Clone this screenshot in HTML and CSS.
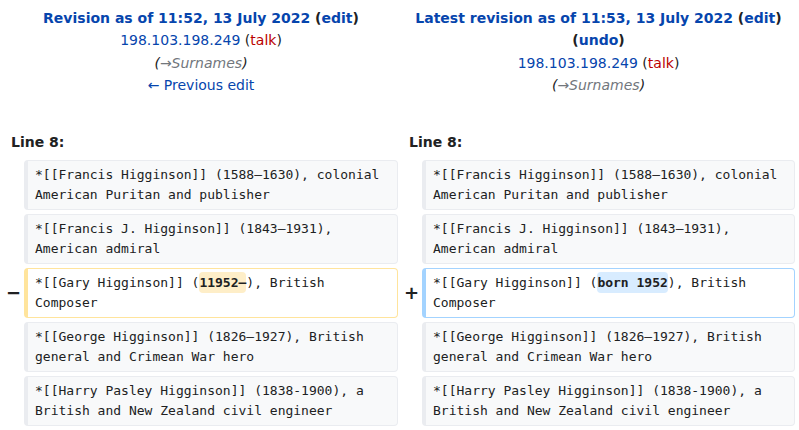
FILE: index.html
```html
<!DOCTYPE html>
<html>
<head>
<meta charset="utf-8">
<link rel="stylesheet" href="styles.css">
</head>
<body>
<div class="diff">
  <div class="title">
    <div class="t-main"><a class="lnk">Revision as of 11:52, 13 July 2022</a> <span class="paren">(<a class="lnk">edit</a>)</span></div>
    <div><a class="ip">198.103.198.249</a> <span class="paren-n">(<a class="talk">talk</a>)</span></div>
    <div class="cmt"><span class="pc">(</span>→Surnames<span class="pc">)</span></div>
    <div><a class="ip">← Previous edit</a></div>
  </div>
  <div class="title">
    <div class="t-main"><a class="lnk">Latest revision as of 11:53, 13 July 2022</a> <span class="paren">(<a class="lnk">edit</a>)</span> <span class="paren">(<a class="lnk">undo</a>)</span></div>
    <div><a class="ip">198.103.198.249</a> <span class="paren-n">(<a class="talk">talk</a>)</span></div>
    <div class="cmt"><span class="pc">(</span>→Surnames<span class="pc">)</span></div>
  </div>

  <div class="lineno">Line 8:</div>
  <div class="lineno">Line 8:</div>

  <div class="marker"></div>
  <div class="cell ctx">*[[Francis Higginson]] (1588–1630), colonial American Puritan and publisher</div>
  <div class="marker"></div>
  <div class="cell ctx">*[[Francis Higginson]] (1588–1630), colonial American Puritan and publisher</div>

  <div class="marker"></div>
  <div class="cell ctx">*[[Francis J. Higginson]] (1843–1931), American admiral</div>
  <div class="marker"></div>
  <div class="cell ctx">*[[Francis J. Higginson]] (1843–1931), American admiral</div>

  <div class="marker">−</div>
  <div class="cell del">*[[Gary Higginson]] (<del class="hl-del">11952–</del>), British Composer</div>
  <div class="marker">+</div>
  <div class="cell add">*[[Gary Higginson]] (<ins class="hl-add">born 1952</ins>), British Composer</div>

  <div class="marker"></div>
  <div class="cell ctx">*[[George Higginson]] (1826–1927), British general and Crimean War hero</div>
  <div class="marker"></div>
  <div class="cell ctx">*[[George Higginson]] (1826–1927), British general and Crimean War hero</div>

  <div class="marker"></div>
  <div class="cell ctx">*[[Harry Pasley Higginson]] (1838-1900), a British and New Zealand civil engineer</div>
  <div class="marker"></div>
  <div class="cell ctx">*[[Harry Pasley Higginson]] (1838-1900), a British and New Zealand civil engineer</div>
</div>
</body>
</html>
```

FILE: styles.css
```css
html, body {
  margin: 0;
  padding: 0;
  background: #fff;
}
body {
  font-family: "DejaVu Sans", sans-serif;
  font-size: 14px;
  color: #202122;
  width: 799px;
  overflow: hidden;
}
.diff {
  display: grid;
  grid-template-columns: 24px 374px 24px 373px;
  row-gap: 4px;
}
.title {
  grid-column: span 2;
  text-align: center;
  line-height: 1.6;
  padding-top: 7px;
  padding-left: 4px;
}
.t-main {
  font-weight: bold;
}
.lnk, .ip {
  color: #0645ad;
  text-decoration: none;
}
.talk {
  color: #ba0000;
}
.paren { color: #202122; }
.paren-n { color: #202122; }
.cmt {
  font-style: italic;
  color: #72777d;
}
.cmt .pc { color: #202122; }
.lineno {
  grid-column: span 2;
  font-weight: bold;
  line-height: 1.6;
  padding: 30px 0 0 11px;
  margin-bottom: 3px;
}
.marker {
  text-align: right;
  padding-right: 3px;
  font-weight: bold;
  font-size: 18px;
  line-height: 50px;
}
.cell {
  font-family: "DejaVu Sans Mono", monospace;
  font-size: 13px;
  line-height: 20px;
  padding: 4px 7px;
  border-style: solid;
  border-width: 1px 1px 1px 4px;
  border-radius: 4px;
  overflow-wrap: break-word;
}
.ctx {
  background: #f8f9fa;
  border-color: #eaecf0;
}
.del {
  background: #fff;
  border-color: #ffe49c;
}
.add {
  background: #fff;
  border-color: #a3d3ff;
}
.hl-del, .hl-add {
  text-decoration: none;
  font-weight: bold;
  border-radius: 4px;
  padding: 3px 0;
}
.hl-del { background: #feeec8; }
.hl-add { background: #d8ecff; }
```
